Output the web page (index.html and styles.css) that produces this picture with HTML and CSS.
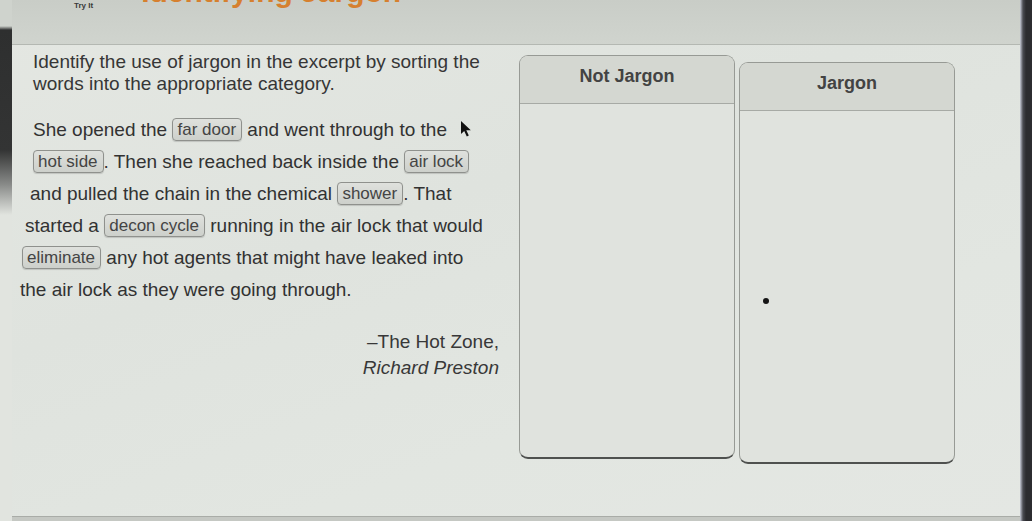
FILE: index.html
```html
<!DOCTYPE html>
<html lang="en">
<head>
<meta charset="utf-8">
<title>Identifying Jargon - Try It</title>
<link rel="stylesheet" href="styles.css">
</head>
<body>
<div class="screen">
  <div class="bezel bezel-left"></div>
  <div class="main">
    <header class="topbar">
      <span class="tryit">Try It</span>
      <h1 class="title">Identifying Jargon</h1>
    </header>
    <div class="body">
      <section class="left">
        <p class="prompt">Identify the use of jargon in the excerpt by sorting the<br>words into the appropriate category.</p>
        <div class="passage">
          <div class="line">She opened the <span class="tok">far door</span> and went through to the</div>
          <div class="line"><span class="tok">hot side</span>. Then she reached back inside the <span class="tok">air lock</span></div>
          <div class="line">and pulled the chain in the chemical <span class="tok">shower</span>. That</div>
          <div class="line">started a <span class="tok">decon cycle</span> running in the air lock that would</div>
          <div class="line"><span class="tok">eliminate</span> any hot agents that might have leaked into</div>
          <div class="line">the air lock as they were going through.</div>
        </div>
        <div class="attrib">
          <div>–The Hot Zone,</div>
          <div class="author">Richard Preston</div>
        </div>
        <svg class="cursor" width="12" height="17" viewBox="0 0 12 17" aria-hidden="true"><path d="M1 1 L1 14 L4.2 11 L6.8 16.5 L8.8 15.6 L6.3 10.2 L10.8 10.2 Z" fill="#111"/></svg>
      </section>
      <section class="bins">
        <div class="bin bin-a">
          <div class="bin-head">Not Jargon</div>
          <div class="bin-body"></div>
        </div>
        <div class="bin bin-b">
          <div class="bin-head">Jargon</div>
          <div class="bin-body"><span class="dot"></span></div>
        </div>
      </section>
    </div>
    <div class="footer-strip"></div>
  </div>
  <div class="bezel bezel-right"></div>
</div>
</body>
</html>
```
FILE: styles.css
```css
html, body {
  margin: 0;
  padding: 0;
  background: #e1e4df;
}
.screen {
  width: 1032px;
  height: 521px;
  display: flex;
  overflow: hidden;
  font-family: "Liberation Sans", Arial, sans-serif;
  color: #333333;
  background: #e1e4df;
}
.bezel-left {
  width: 12px;
  flex: none;
  background: linear-gradient(to bottom, #cfd3cd 0, #cfd3cd 26px, #2e2f2f 30px, #333434 150px, #8a8c8a 185px, #e1e4df 215px);
}
.bezel-right {
  width: 12px;
  flex: none;
  background: linear-gradient(to right, #c9ccd8 0, #4a4b52 3px, #2c2c30 6px);
}
.main {
  flex: 1;
  display: flex;
  flex-direction: column;
  min-width: 0;
  background: linear-gradient(160deg, #e4e7e2 0%, #dfe3de 40%, #e2e6e1 70%, #e4e7e3 100%);
}
.topbar {
  height: 44px;
  flex: none;
  display: flex;
  align-items: flex-start;
  overflow: hidden;
  background: linear-gradient(to bottom, #c9cdc7, #d0d4ce);
  border-bottom: 1px solid #b4b8b2;
}
.tryit {
  font-size: 8px;
  line-height: 10px;
  margin: 1px 0 0 62px;
  color: #3a3a3a;
  font-weight: bold;
}
.title {
  margin: -23px 0 0 48px;
  font-size: 30px;
  line-height: 30px;
  font-weight: bold;
  color: #d6802f;
  white-space: nowrap;
}
.body {
  flex: 1;
  display: flex;
  align-items: flex-start;
}
.left {
  position: relative;
  width: 478px;
  margin-left: 21px;
  flex: none;
}
.prompt {
  margin: 6px 0 0 0;
  font-size: 19px;
  line-height: 22px;
  color: #363636;
  white-space: nowrap;
}
.passage {
  margin-top: 19px;
  font-size: 19px;
  line-height: 32px;
  white-space: nowrap;
  color: #323232;
}
.line:nth-child(3) { margin-left: -3px; }
.line:nth-child(4) { margin-left: -8px; }
.line:nth-child(5) { margin-left: -11px; }
.line:nth-child(6) { margin-left: -13px; }
.tok {
  display: inline-block;
  font-size: 17px;
  line-height: 21px;
  padding: 0 5px 0 4px;
  border: 1px solid #8f918d;
  border-radius: 4px;
  background: linear-gradient(to bottom, #dfe1dd, #cdd0cb);
  box-shadow: 0 1px 1px rgba(0,0,0,0.15);
  color: #444444;
  vertical-align: 1px;
}
.attrib {
  margin-top: 23px;
  width: 466px;
  text-align: right;
  font-size: 19px;
  line-height: 26px;
  color: #383838;
}
.author {
  font-style: italic;
}
.cursor {
  position: absolute;
  left: 427px;
  top: 75px;
}
.bins {
  display: flex;
  gap: 4px;
  margin-left: 8px;
  align-items: flex-start;
}
.bin {
  width: 214px;
  height: 401px;
  display: flex;
  flex-direction: column;
  border: 1px solid #979a95;
  border-bottom: 2px solid #4f514f;
  border-radius: 9px;
  overflow: hidden;
  background: #e0e3de;
}
.bin-a { margin-top: 10px; }
.bin-b { margin-top: 17px; width: 214px; height: 399px; }
.bin-head {
  height: 48px;
  flex: none;
  box-sizing: border-box;
  padding-top: 9px;
  text-align: center;
  font-size: 18px;
  line-height: 22px;
  font-weight: bold;
  color: #434343;
  background: #d4d7d1;
  border-bottom: 1px solid #a7aaa5;
}
.bin-body {
  flex: 1;
  position: relative;
}
.dot {
  position: absolute;
  left: 23px;
  top: 187px;
  width: 6px;
  height: 6px;
  border-radius: 50%;
  background: #151515;
}
.footer-strip {
  height: 4px;
  flex: none;
  background: #c5c8c3;
  border-top: 1px solid #a9aca7;
}
```
